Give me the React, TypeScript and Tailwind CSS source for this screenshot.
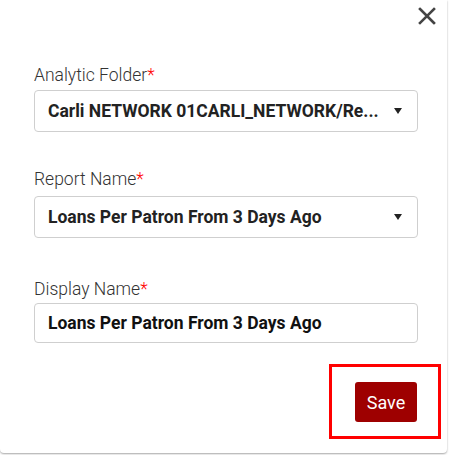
export default function App() {
  return (
    <div className="h-[455px] w-[449px] bg-white" style={{ fontFamily: 'Roboto, "Liberation Sans", sans-serif' }}>
      <div className="relative h-[453px] w-[447px] rounded-b-[4px] bg-white shadow-[0_1px_2px_rgba(0,0,0,0.35)]">
        {/* close */}
        <div className="flex justify-end pt-[7px] pr-[11px]">
          <button className="h-[18px] w-[18px] text-[#444]" aria-label="Close">
            <svg viewBox="0 0 18 18" width="18" height="18">
              <path d="M2 2L16 16M16 2L2 16" stroke="currentColor" strokeWidth="2.6" strokeLinecap="square" />
            </svg>
          </button>
        </div>

        <div className="pl-[34px] pr-[29px]">
          {/* Analytic Folder */}
          <div className="mt-[38px]">
            <label className="block text-[17.5px] font-light leading-[24px] text-[#333]">
              Analytic Folder<span className="text-[#ff0000]">*</span>
            </label>
            <div className="mt-[3px] flex h-[42px] items-center justify-between rounded-[4px] border border-[#cfcfcf] pl-[13px] pr-[15px]">
              <span className="text-[17.5px] font-bold text-[#222]">Carli NETWORK 01CARLI_NETWORK/Re...</span>
              <span className="h-0 w-0 border-x-[4px] border-t-[6px] border-x-transparent border-t-[#222]" />
            </div>
          </div>

          {/* Report Name */}
          <div className="mt-[35px]">
            <label className="block text-[17.5px] font-light leading-[24px] text-[#333]">
              Report Name<span className="text-[#ff0000]">*</span>
            </label>
            <div className="mt-[5px] flex h-[42px] items-center justify-between rounded-[4px] border border-[#cfcfcf] pl-[13px] pr-[15px]">
              <span className="text-[17.5px] font-bold text-[#222]">Loans Per Patron From 3 Days Ago</span>
              <span className="h-0 w-0 border-x-[4px] border-t-[6px] border-x-transparent border-t-[#222]" />
            </div>
          </div>

          {/* Display Name */}
          <div className="mt-[39px]">
            <label className="block text-[17.5px] font-light leading-[24px] text-[#333]">
              Display Name<span className="text-[#ff0000]">*</span>
            </label>
            <input
              readOnly
              value="Loans Per Patron From 3 Days Ago"
              className="mt-[2px] block h-[40px] w-full rounded-[4px] border border-[#cfcfcf] pl-[13px] text-[17.5px] font-bold text-[#111] outline-none"
            />
          </div>
        </div>

        {/* save */}
        <div className="flex justify-end pr-[6px] pt-[21px]">
          <div className="border-[3px] border-[#ff0000] pl-[23px] pr-[21px] pt-[15px] pb-[14px]">
            <button className="h-[40px] w-[62px] rounded-[3px] bg-[#9e0000] text-[18px] text-white">Save</button>
          </div>
        </div>
      </div>
    </div>
  );
}
